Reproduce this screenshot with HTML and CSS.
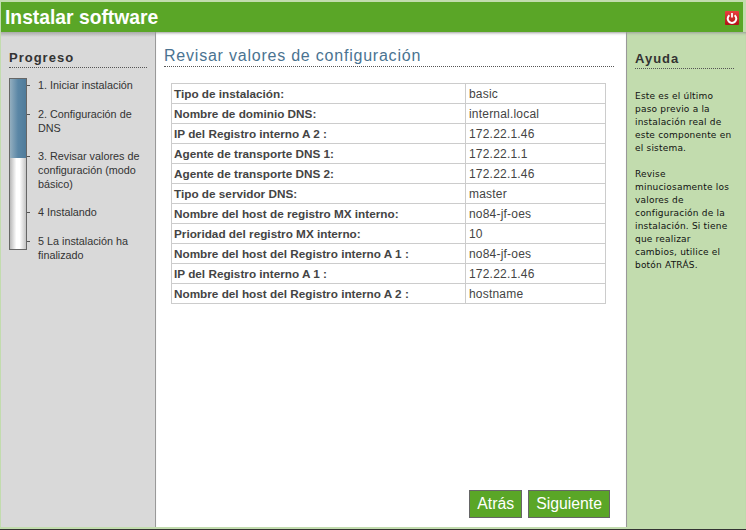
FILE: index.html
```html
<!DOCTYPE html>
<html lang="es">
<head>
<meta charset="utf-8">
<title>Instalar software</title>
<link rel="stylesheet" href="styles.css">
</head>
<body>
<div class="window">
  <header class="header">
    <h1 class="title">Instalar software</h1>
    <svg class="close" width="14" height="14" viewBox="0 0 14 14">
      <defs>
        <linearGradient id="power-bg" x1="0" y1="0" x2="0" y2="1">
          <stop offset="0" stop-color="#e8403f"/>
          <stop offset="1" stop-color="#b01216"/>
        </linearGradient>
      </defs>
      <rect width="14" height="14" rx="1" fill="url(#power-bg)"/>
      <path d="M4.4 4.2a4.3 4.3 0 1 0 5.2 0" fill="none" stroke="#fff" stroke-width="2"/>
      <path d="M7 2v4.5" stroke="#fff" stroke-width="1.8"/>
    </svg>
  </header>
  <div class="body">
    <aside class="progress">
      <h2 class="side-title">Progreso</h2>
      <div class="steps">
        <div class="bar"><div class="bar-fill"></div></div>
        <ol class="step-list">
          <li class="step step-1">1. Iniciar instalación</li>
          <li class="step step-2">2. Configuración de DNS</li>
          <li class="step step-3">3. Revisar valores de configuración (modo básico)</li>
          <li class="step step-4">4 Instalando</li>
          <li class="step">5 La instalación ha finalizado</li>
        </ol>
      </div>
    </aside>
    <main class="main">
      <h2 class="main-title">Revisar valores de configuración</h2>
      <table class="config">
        <tr><th>Tipo de instalación:</th><td>basic</td></tr>
        <tr><th>Nombre de dominio DNS:</th><td>internal.local</td></tr>
        <tr><th>IP del Registro interno A 2 :</th><td>172.22.1.46</td></tr>
        <tr><th>Agente de transporte DNS 1:</th><td>172.22.1.1</td></tr>
        <tr><th>Agente de transporte DNS 2:</th><td>172.22.1.46</td></tr>
        <tr><th>Tipo de servidor DNS:</th><td>master</td></tr>
        <tr><th>Nombre del host de registro MX interno:</th><td>no84-jf-oes</td></tr>
        <tr><th>Prioridad del registro MX interno:</th><td>10</td></tr>
        <tr><th>Nombre del host del Registro interno A 1 :</th><td>no84-jf-oes</td></tr>
        <tr><th>IP del Registro interno A 1 :</th><td>172.22.1.46</td></tr>
        <tr><th>Nombre del host del Registro interno A 2 :</th><td>hostname</td></tr>
      </table>
      <div class="actions">
        <button class="btn" type="button">Atrás</button>
        <button class="btn" type="button">Siguiente</button>
      </div>
    </main>
    <aside class="help">
      <h2 class="side-title help-title">Ayuda</h2>
      <p class="help-text help-first">Este es el último paso previo a la instalación real de este componente en el sistema.</p>
      <p class="help-text">Revise minuciosamente los valores de configuración de la instalación. Si tiene que realizar cambios, utilice el botón ATRÁS.</p>
    </aside>
  </div>
</div>
</body>
</html>
```
FILE: styles.css
```css
* { box-sizing: border-box; }
html, body { margin: 0; padding: 0; height: 100%; overflow: hidden; }
body { background: #c2dcae; font-family: "Liberation Sans", Arial, sans-serif; }
.window { width: 746px; height: 530px; padding: 2px 0 2px 1px; display: flex; flex-direction: column; border-bottom: 1px solid #333; }
.header { height: 30px; width: 742px; flex: none; background: #5aa627; display: flex; align-items: center; justify-content: space-between; padding: 0 4px; }
.title { margin: 2px 0 0; color: #fff; font-size: 19.3px; font-weight: bold; line-height: 28px; }
.close { margin-top: 1px; }
.body { flex: 1; display: flex; min-height: 0; }
.progress { width: 155px; background: linear-gradient(#aaa, #d9d9d9 5px); border-right: 1px solid #999; padding: 17px 8px 0 8px; }
.side-title { margin: 0; font-size: 13px; font-weight: bold; color: #333; letter-spacing: 1px; border-bottom: 1px dotted #555; line-height: 18px; height: 19px; }
.steps { display: flex; margin-top: 10px; }
.bar { width: 18px; height: 172px; flex: none; border: 1px solid #666; background: linear-gradient(90deg, #b8b8b8, #fff 40%, #fff 60%, #c4c4c4); }
.bar-fill { height: 79px; background: linear-gradient(90deg, #93aebf, #5b87a6 50%, #4f7b9a); }
.step-list { list-style: none; margin: 0; padding: 0 0 0 11px; font-size: 10.8px; line-height: 14px; color: #333; }
.step { position: relative; }
.step::before { content: ""; position: absolute; left: -11px; top: 7px; width: 3px; height: 1px; background: #555; }
.step-1 { margin-bottom: 15px; }
.step-2 { margin-bottom: 14px; }
.step-3 { margin-bottom: 14px; }
.step-4 { margin-bottom: 15px; }
.main { width: 471px; flex: none; background: #fff; border-right: 1px solid #999; padding: 14px 12px 9px 8px; display: flex; flex-direction: column; box-shadow: inset 0 3px 3px -2px #999; }
.main-title { margin: 0; color: #4a7391; font-size: 16px; font-weight: normal; letter-spacing: .78px; line-height: 20px; height: 21px; border-bottom: 1px dotted #555; }
.config { margin: 16px 0 0 7px; width: 435px; border-collapse: collapse; font-size: 12px; color: #444; }
.config th, .config td { border: 1px solid #ccc; height: 20px; padding: 0 2px; text-align: left; }
.config th { width: 294px; font-weight: bold; font-size: 11.75px; }
.config td { padding-left: 3px; letter-spacing: .2px; }
.actions { margin-top: auto; display: flex; justify-content: flex-end; gap: 6px; margin-right: 4px; }
.btn { height: 28px; padding: 0 7px; background: #5aa627; border: 1px solid #666; color: #fff; font: 15.8px "Liberation Sans", Arial, sans-serif; }
.help { flex: 1; padding: 18px 8px 0 8px; box-shadow: inset 0 3px 3px -2px #999; }
.help-title { width: 99px; }
.help-text { margin: 13px 0 0; width: 100px; font-size: 9px; line-height: 13px; color: #111; letter-spacing: .2px; font-family: "DejaVu Sans", sans-serif; }
.help-first { margin-top: 21px; }
```
